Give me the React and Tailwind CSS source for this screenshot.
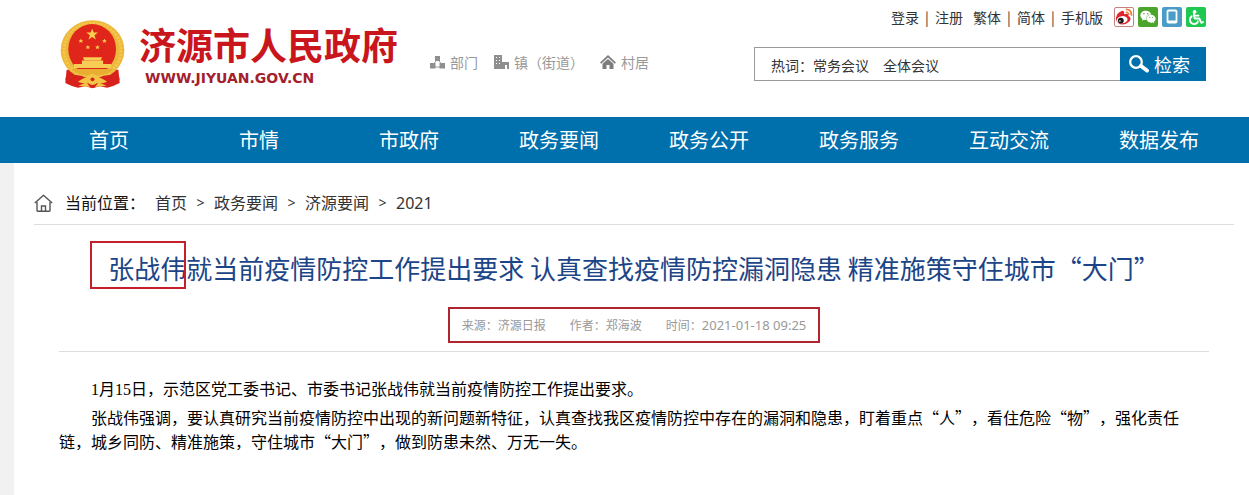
import { FaWeixin, FaWheelchair } from "react-icons/fa";

const navItems = ["首页", "市情", "市政府", "政务要闻", "政务公开", "政务服务", "互动交流", "数据发布"];

const crumbs = ["首页", "政务要闻", "济源要闻", "2021"];

const Emblem = () => (
  <svg viewBox="28 26 196 208" className="h-[69px] w-[65px] shrink-0" aria-hidden="true">
    <path d="M48 176 L44 216 Q62 226 82 230 L104 226 L126 232 L148 226 L170 230 Q190 226 208 216 L204 176 Z" fill="#d8211c" />
    <ellipse cx="126" cy="117" rx="96" ry="90" fill="#edb93c" />
    <ellipse cx="126" cy="117" rx="86" ry="82" fill="none" stroke="#f4c94e" strokeWidth="7" strokeDasharray="7 4" />
    <ellipse cx="125" cy="114" rx="72" ry="76" fill="#e0261b" />
    <path d="M125 52 l4.500 12 h13 l-10.500 8 4 13 -11-8 -11 8 4-13 -10.500-8 h13z" fill="#f9cf4f" />
    <path d="M91 82 l2 5 h5 l-4 3.500 2 5 -5-3 -5 3 2-5 -4-3.500 h5z M162 82 l2 5 h5 l-4 3.500 2 5 -5-3 -5 3 2-5 -4-3.500 h5z M112 101 l2 5 h5 l-4 3.500 2 5 -5-3 -5 3 2-5 -4-3.500 h5z M141 101 l2 5 h5 l-4 3.500 2 5 -5-3 -5 3 2-5 -4-3.500 h5z" fill="#f9cf4f" />
    <path d="M97 138 h58 l-4 9 h-50z M94 148 h64 v11 h24 v12 H70 v-12 h24z" fill="#f8cd55" />
    <path d="M62 174 h128 q-18 20-64 20 t-64-20z" fill="#e9ad31" />
    <path d="M46 196 q36-10 62 4 l-10 10 q-22-10-54-2z M206 196 q-36-10-62 4 l10 10 q22-10 54-2z" fill="#d8211c" />
    <path d="M82 212 q20-16 44-16 t44 16 q-18 8-44 2 q-26 6-44-2z" fill="#f3c445" />
    <circle cx="126" cy="205" r="17" fill="#f3c445" />
    <circle cx="126" cy="205" r="6" fill="#d8211c" />
    <path d="M84 224 l24-10 10 14z M168 224 l-24-10 -10 14z" fill="#f3c445" />
  </svg>
);

const DeptIcon = () => (
  <svg viewBox="0 0 15 15" className="size-[15px]" fill="#8f8f8f" aria-hidden="true">
    <path d="M5 1h5v5H5zM0 8h5.500v5.500H0zM9.500 8H15v5.500H9.500z" />
    <path d="M6 6 L3.500 9 M9 6 L11.500 9 M5 12h5" stroke="#9c9c9c" fill="none" />
  </svg>
);

const TownIcon = () => (
  <svg viewBox="0 0 15 15" className="size-[15px]" fill="#8f8f8f" aria-hidden="true">
    <path fillRule="evenodd" d="M0 0h8v14H0zM2 2v1h1V2zm3 0v1h1V2zM2 5v1h1V5zm3 0v1h1V5zM2 8v1h1V8zm3 0v1h1V8z" />
    <path d="M8 7h7v7h-2v-4h-2v4H8z" />
  </svg>
);

const VillageIcon = () => (
  <svg viewBox="0 0 16 15" className="h-[15px] w-4" aria-hidden="true">
    <path d="M8 0 L16 7.500 14.800 8.700 8 2.500 1.200 8.700 0 7.500z" fill="#7d7d7d" />
    <path d="M8 4 L13.500 8.800V14h-4v-4h-3v4h-4V8.800z" fill="#7d7d7d" />
  </svg>
);

const WeiboIcon = () => (
  <svg viewBox="0 0 20 20" className="size-[18px]" fill="none" aria-hidden="true">
    <path d="M1 11 Q2 5 8 3 Q11 3 10 7 Q15 5 15 9 Q19 11 16 15 Q12 19 6 18 Q1 16 1 11z" fill="#e0252f" />
    <ellipse cx="8" cy="13" rx="6" ry="4" fill="#fff" transform="rotate(-8 8 13)" />
    <circle cx="6.500" cy="14" r="3.200" fill="#1a1a1a" />
    <circle cx="5.500" cy="14.500" r=".9" fill="#fff" />
    <path d="M12 1.500 Q18 1 18.500 8.500" stroke="#ee7a3a" strokeWidth="2" />
    <path d="M12 4.800 Q15 4.500 15.500 8" stroke="#ee7a3a" strokeWidth="1.500" />
  </svg>
);

const SearchIcon = () => (
  <svg viewBox="0 0 22 20" className="h-5 w-[22px]" fill="none" stroke="#fff" aria-hidden="true">
    <circle cx="8" cy="8" r="5.800" strokeWidth="2.300" />
    <path d="M13 12 L19 16.500" strokeWidth="4" strokeLinecap="round" />
  </svg>
);

const HomeIcon = () => (
  <svg viewBox="0 0 19 18" className="h-[18px] w-[19px]" fill="none" stroke="#555" strokeWidth="1.400" aria-hidden="true">
    <path d="M.8 9 L9.500 1.200 18.200 9" strokeLinejoin="round" />
    <path d="M3 8v8.500q0 .7.7.7h11.600q.7 0 .7-.7V8" />
    <path d="M7.500 17v-5h4v5" />
  </svg>
);

const App = () => {
  return (
    <div lang="zh-CN" className="min-h-screen bg-[#f1f1f1] font-['Noto_Sans_CJK_SC',sans-serif] text-[#333] [text-spacing-trim:space-all]">
      <header className="flex items-start bg-white pr-[43px] pb-[28px] pl-[60px]">
        <a href="#" className="flex items-start gap-[14px] pt-5">
          <Emblem />
          <div>
            <h1 className="text-[37px] leading-[48px] font-bold text-[#c9161d]">济源市人民政府</h1>
            <p className="pl-[6px] font-['DejaVu_Sans',sans-serif] text-[14px] leading-5 font-bold text-[#a3202c]">WWW.JIYUAN.GOV.CN</p>
          </div>
        </a>

        <div className="ml-8 flex gap-4 pt-[51px] text-[14px] leading-[22px] text-[#999]">
          <a href="#" className="flex items-center gap-[5px]"><DeptIcon />部门</a>
          <a href="#" className="flex items-center gap-[5px]"><TownIcon />镇（街道）</a>
          <a href="#" className="flex items-center gap-[5px]"><VillageIcon />村居</a>
        </div>

        <div className="ml-auto w-[452px] pt-[7px]">
          <div className="flex h-5 items-center justify-end text-[14px] leading-5">
            <a href="#">登录</a>
            <span className="w-4 text-center">|</span>
            <a href="#">注册</a>
            <a href="#" className="ml-[10px]">繁体</a>
            <span className="w-4 text-center">|</span>
            <a href="#">简体</a>
            <span className="w-4 text-center">|</span>
            <a href="#">手机版</a>
            <div className="ml-[11px] flex gap-1">
              <a href="#" aria-label="微博" className="flex size-5 items-center justify-center rounded-xs border border-[#c98080] bg-white"><WeiboIcon /></a>
              <a href="#" aria-label="微信" className="flex size-5 items-center justify-center rounded-xs bg-[#4ba52c] text-white"><FaWeixin size={16} /></a>
              <a href="#" aria-label="手机" className="flex size-5 items-center justify-center rounded-xs bg-[#4b9cc6]">
                <svg viewBox="0 0 20 20" className="size-5" fill="none" stroke="#fff" aria-hidden="true">
                  <rect x="5.500" y="3.500" width="9" height="12" rx="1" strokeWidth="1.800" />
                  <path d="M5 14.500h10" strokeWidth="2" />
                </svg>
              </a>
              <a href="#" aria-label="无障碍" className="flex size-5 items-center justify-center rounded-xs bg-[#1fc850] text-white"><FaWheelchair size={15} /></a>
            </div>
          </div>

          <form className="mt-5 flex h-[34px]" onSubmit={(e) => e.preventDefault()}>
            <input
              type="text"
              aria-label="检索"
              defaultValue="热词：常务会议　全体会议"
              className="min-w-0 flex-1 border border-r-0 border-[#999] px-4 pt-[2px] text-[14px] outline-none"
            />
            <button type="submit" className="flex w-[86px] items-center gap-1 bg-[#0070ad] pl-2 text-[18px] text-white">
              <SearchIcon />
              检索
            </button>
          </form>
        </div>
      </header>

      <nav className="grid h-[46px] grid-cols-8 items-center bg-[#0070ad] pr-[15px] pl-[34px] text-center text-[20px] text-white">
        {navItems.map((item) => (
          <a key={item} href="#">{item}</a>
        ))}
      </nav>

      <main className="ml-[14px] min-h-[332px] bg-white pt-6 pr-[15px] pl-5">
        <div className="flex items-center border-b border-[#ddd] pb-[5px] font-['Noto_Sans','Noto_Sans_CJK_SC',sans-serif] text-[16px] leading-8">
          <HomeIcon />
          <span className="ml-3 text-[#111]">当前位置：</span>
          <div className="ml-[10px] flex">
            {crumbs.map((item, i) => (
              <div key={item} className="flex">
                {i > 0 && <span className="w-[27px] text-center text-[14px]">&gt;</span>}
                <a href="#">{item}</a>
              </div>
            ))}
          </div>
        </div>

        <article className="px-[25px] pt-4">
          <h2 className="text-center text-[26px] leading-[54px] whitespace-nowrap text-[#1c4587]">
            <span className="relative">
              张战伟
              <span className="absolute -top-2 right-0 h-12 w-24 border-2 border-[#c4202b]"></span>
            </span>
            就当前疫情防控工作提出要求 认真查找疫情防控漏洞隐患 精准施策守住城市“大门”
          </h2>

          <div className="flex justify-center border-b border-[#ddd] pt-3 pb-2">
            <div className="flex h-9 items-center gap-6 border-2 border-[#b0262e] px-3 text-[12px] text-[#999]">
              <span>来源：济源日报</span>
              <span>作者：郑海波</span>
              <span>
                时间：<time className="font-['Noto_Sans',sans-serif] text-[13px] leading-none">2021-01-18 09:25</time>
              </span>
            </div>
          </div>

          <div className="space-y-[5px] pt-6 text-[16px] leading-6 text-black">
            <p className="indent-8">
              <span className="font-['Liberation_Serif',serif] leading-none">1</span>月<span className="font-['Liberation_Serif',serif] leading-none">15</span>日，示范区党工委书记、市委书记张战伟就当前疫情防控工作提出要求。
            </p>
            <p className="indent-8">
              张战伟强调，要认真研究当前疫情防控中出现的新问题新特征，认真查找我区疫情防控中存在的漏洞和隐患，盯着重点“人”，看住危险“物”，强化责任链，城乡同防、精准施策，守住城市“大门”，做到防患未然、万无一失。
            </p>
          </div>
        </article>
      </main>
    </div>
  );
};

export default App;
